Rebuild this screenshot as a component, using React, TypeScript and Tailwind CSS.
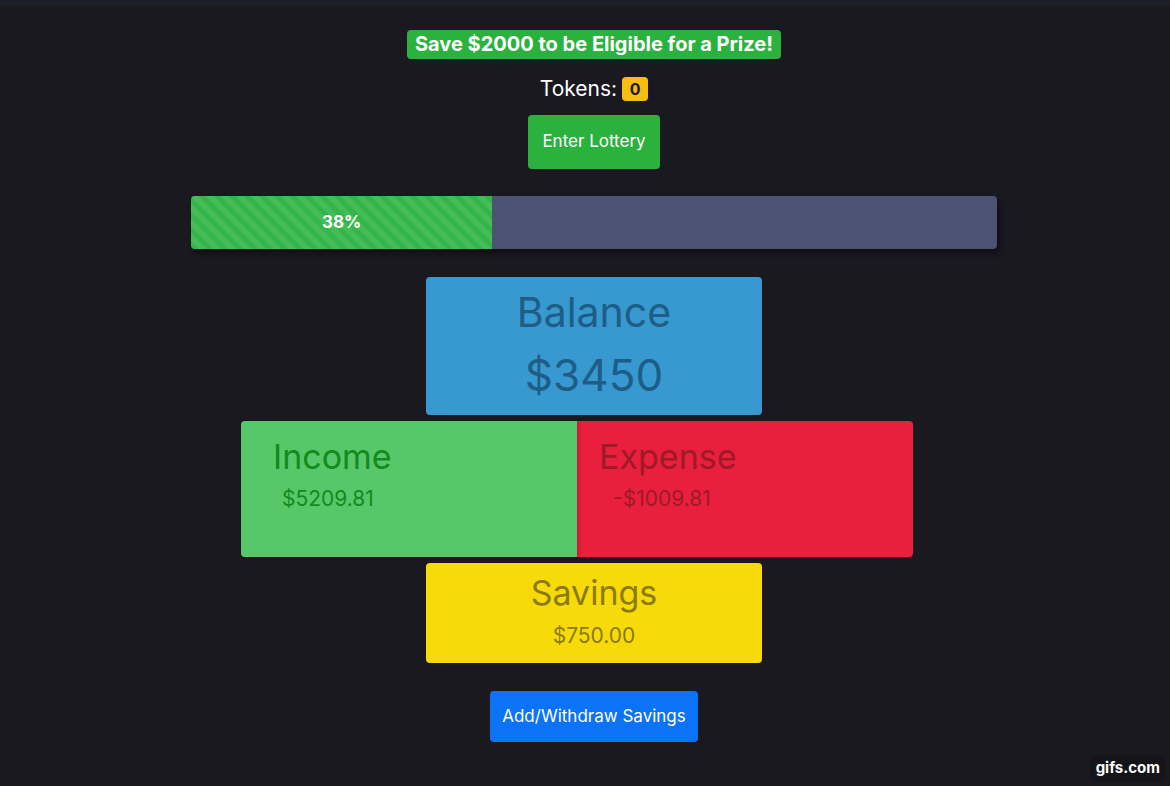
import React from "react";

export default function App() {
  const percent = 38;
  return (
    <div
      className="relative w-full min-h-[786px] bg-[#1a1920]"
      style={{ fontFamily: "Inter, 'Noto Sans', sans-serif" }}
    >
      <div className="w-full h-[6px] bg-[#1c1f29]" />
      <div className="pl-[18px] flex flex-col items-center">
        <div className="mt-[24px] h-[29px] px-[8px] rounded-[4px] bg-[#2bb13e] text-white font-bold text-[20px] leading-[29px] flex items-center">
          Save $2000 to be Eligible for a Prize!
        </div>
        <div className="mt-[18px] h-[24px] flex items-center gap-[5px] text-white text-[21px]">
          <span>Tokens:</span>
          <span className="h-[24px] w-[26px] rounded-[4px] bg-[#f6bf0f] text-[#1a1920] font-bold text-[16px] flex items-center justify-center">
            0
          </span>
        </div>
        <button className="mt-[14px] h-[54px] w-[132px] rounded-[4px] bg-[#2bb13e] text-white text-[17px]">
          Enter Lottery
        </button>
        <div className="mt-[27px] w-[806px] h-[53px] rounded-[4px] bg-[#4b5274] overflow-hidden flex shadow-[3px_4px_6px_rgba(0,0,0,0.45)]">
          <div
            className="h-full bg-[#34b548] bg-[linear-gradient(45deg,rgba(255,255,255,.09)_25%,transparent_25%,transparent_50%,rgba(255,255,255,.09)_50%,rgba(255,255,255,.09)_75%,transparent_75%,transparent)] bg-size-[15px_15px] flex items-center justify-center text-white font-bold text-[17px]"
            style={{ width: `${(percent * 7.93) / 806 * 100}%` }}
          >
            {percent}%
          </div>
        </div>
        <div className="mt-[28px] w-[336px] h-[138px] rounded-[4px] bg-[#3799d0] flex flex-col items-center text-[#1e5d86]">
          <div className="mt-[12px] text-[41px] leading-[46px]">Balance</div>
          <div className="mt-[14px] text-[44px] leading-[52px]">$3450</div>
        </div>
        <div className="mt-[6px] mr-[34px] flex">
          <div className="w-[336px] h-[136px] rounded-l-[4px] bg-[#57c76a] text-[#148a1d] pl-[32px] shadow-[2px_0_4px_rgba(0,0,0,0.15)] z-10">
            <div className="mt-[16px] text-[34px] leading-[40px]">Income</div>
            <div className="mt-[8px] ml-[9px] text-[21px] leading-[28px]">$5209.81</div>
          </div>
          <div className="w-[336px] h-[136px] rounded-r-[4px] bg-[#e91f3e] text-[#9d1a26] pl-[22px]">
            <div className="mt-[16px] text-[34px] leading-[40px]">Expense</div>
            <div className="mt-[8px] ml-[14px] text-[21px] leading-[28px]">-$1009.81</div>
          </div>
        </div>
        <div className="mt-[6px] w-[336px] h-[100px] rounded-[4px] bg-[#f6da0a] flex flex-col items-center text-[#8b7a0d]">
          <div className="mt-[10px] text-[34px] leading-[40px]">Savings</div>
          <div className="mt-[9px] text-[21px] leading-[28px]">$750.00</div>
        </div>
        <button className="mt-[28px] h-[51px] w-[208px] rounded-[4px] bg-[#0c72f6] text-white text-[17px]">
          Add/Withdraw Savings
        </button>
      </div>
      <div className="absolute right-[4px] bottom-[4px] h-[27px] px-[6px] rounded-[6px] bg-[#141419] text-white font-bold text-[15px] flex items-center">
        gifs.com
      </div>
    </div>
  );
}
